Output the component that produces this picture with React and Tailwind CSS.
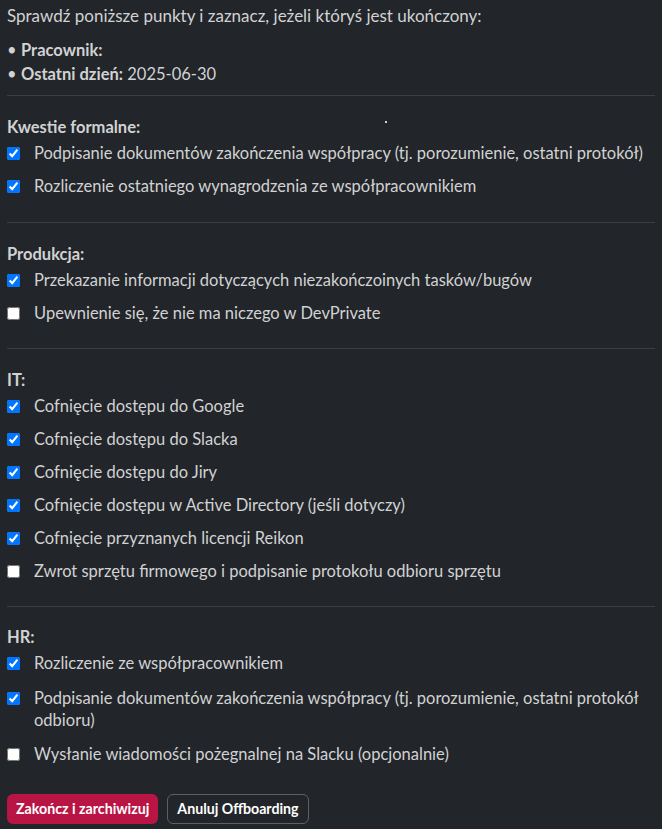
import { useState } from "react";

const sections = [
  {
    title: "Kwestie formalne:",
    pad: "pb-[25px] pt-[20px]",
    gap: "gap-[11px]",
    items: [
      ["Podpisanie dokumentów zakończenia współpracy (tj. porozumienie, ostatni protokół)", true],
      ["Rozliczenie ostatniego wynagrodzenia ze współpracownikiem", true],
    ],
  },
  {
    title: "Produkcja:",
    pad: "pb-[24px] pt-[20px]",
    gap: "gap-[11px]",
    items: [
      ["Przekazanie informacji dotyczących niezakończoinych tasków/bugów", true],
      ["Upewnienie się, że nie ma niczego w DevPrivate", false],
    ],
  },
  {
    title: "IT:",
    pad: "pb-[24px] pt-[20px]",
    gap: "gap-[11px]",
    items: [
      ["Cofnięcie dostępu do Google", true],
      ["Cofnięcie dostępu do Slacka", true],
      ["Cofnięcie dostępu do Jiry", true],
      ["Cofnięcie dostępu w Active Directory (jeśli dotyczy)", true],
      ["Cofnięcie przyznanych licencji Reikon", true],
      ["Zwrot sprzętu firmowego i podpisanie protokołu odbioru sprzętu", false],
    ],
  },
  {
    title: "HR:",
    pad: "pb-[29px] pt-[19px]",
    gap: "gap-[12.5px]",
    items: [
      ["Rozliczenie ze współpracownikiem", true],
      ["Podpisanie dokumentów zakończenia współpracy (tj. porozumienie, ostatni protokół odbioru)", true],
      ["Wysłanie wiadomości pożegnalnej na Slacku (opcjonalnie)", false],
    ],
  },
];

function CheckRow({ label, initial }) {
  const [checked, setChecked] = useState(initial);
  return (
    <label className="flex items-start gap-[14px]">
      <input
        type="checkbox"
        checked={checked}
        onChange={() => setChecked((v) => !v)}
        className="m-0 mt-[5px] h-[13px] w-[13px] shrink-0 accent-[#0075ff]"
      />
      <span className="leading-[22px]">{label}</span>
    </label>
  );
}

export default function App() {
  return (
    <div
      className="min-h-screen bg-[#222529] px-[7px] pt-[5px] text-[16.5px] text-[#d1d2d3]"
      style={{ fontFamily: "Lato, 'Noto Sans', sans-serif" }}
    >
      <p className="text-[17px] leading-[22px]">Sprawdź poniższe punkty i zaznacz, jeżeli któryś jest ukończony:</p>
      <ul className="relative mt-[11px] pb-[9px] leading-[24px]">
        <li className="flex">
          <span className="w-[14px]">•</span>
          <span className="font-bold">Pracownik:</span>
        </li>
        <li className="flex">
          <span className="w-[14px]">•</span>
          <span>
            <span className="font-bold">Ostatni dzień:</span> 2025-06-30
          </span>
        </li>
        <span className="absolute left-[378px] top-[83px] h-[2px] w-[2px] bg-[#d1d2d3]" />
      </ul>

      {sections.map((s) => (
        <section key={s.title} className={`border-t border-[#3c3e42] ${s.pad}`}>
          <h3 className="font-bold leading-[22px]">{s.title}</h3>
          <div className={`mt-[4px] flex flex-col ${s.gap}`}>
            {s.items.map(([label, checked]) => (
              <CheckRow key={label} label={label} initial={checked} />
            ))}
          </div>
        </section>
      ))}

      <div className="flex gap-[9px] pb-[5px]">
        <button
          type="button"
          className="h-[30px] rounded-[6px] bg-[#b81545] px-[9px] text-[14.2px] font-bold text-white"
        >
          Zakończ i zarchiwizuj
        </button>
        <button
          type="button"
          className="h-[30px] rounded-[6px] border border-[#5e6064] px-[9px] text-[14.2px] font-bold text-white"
        >
          Anuluj Offboarding
        </button>
      </div>
    </div>
  );
}
